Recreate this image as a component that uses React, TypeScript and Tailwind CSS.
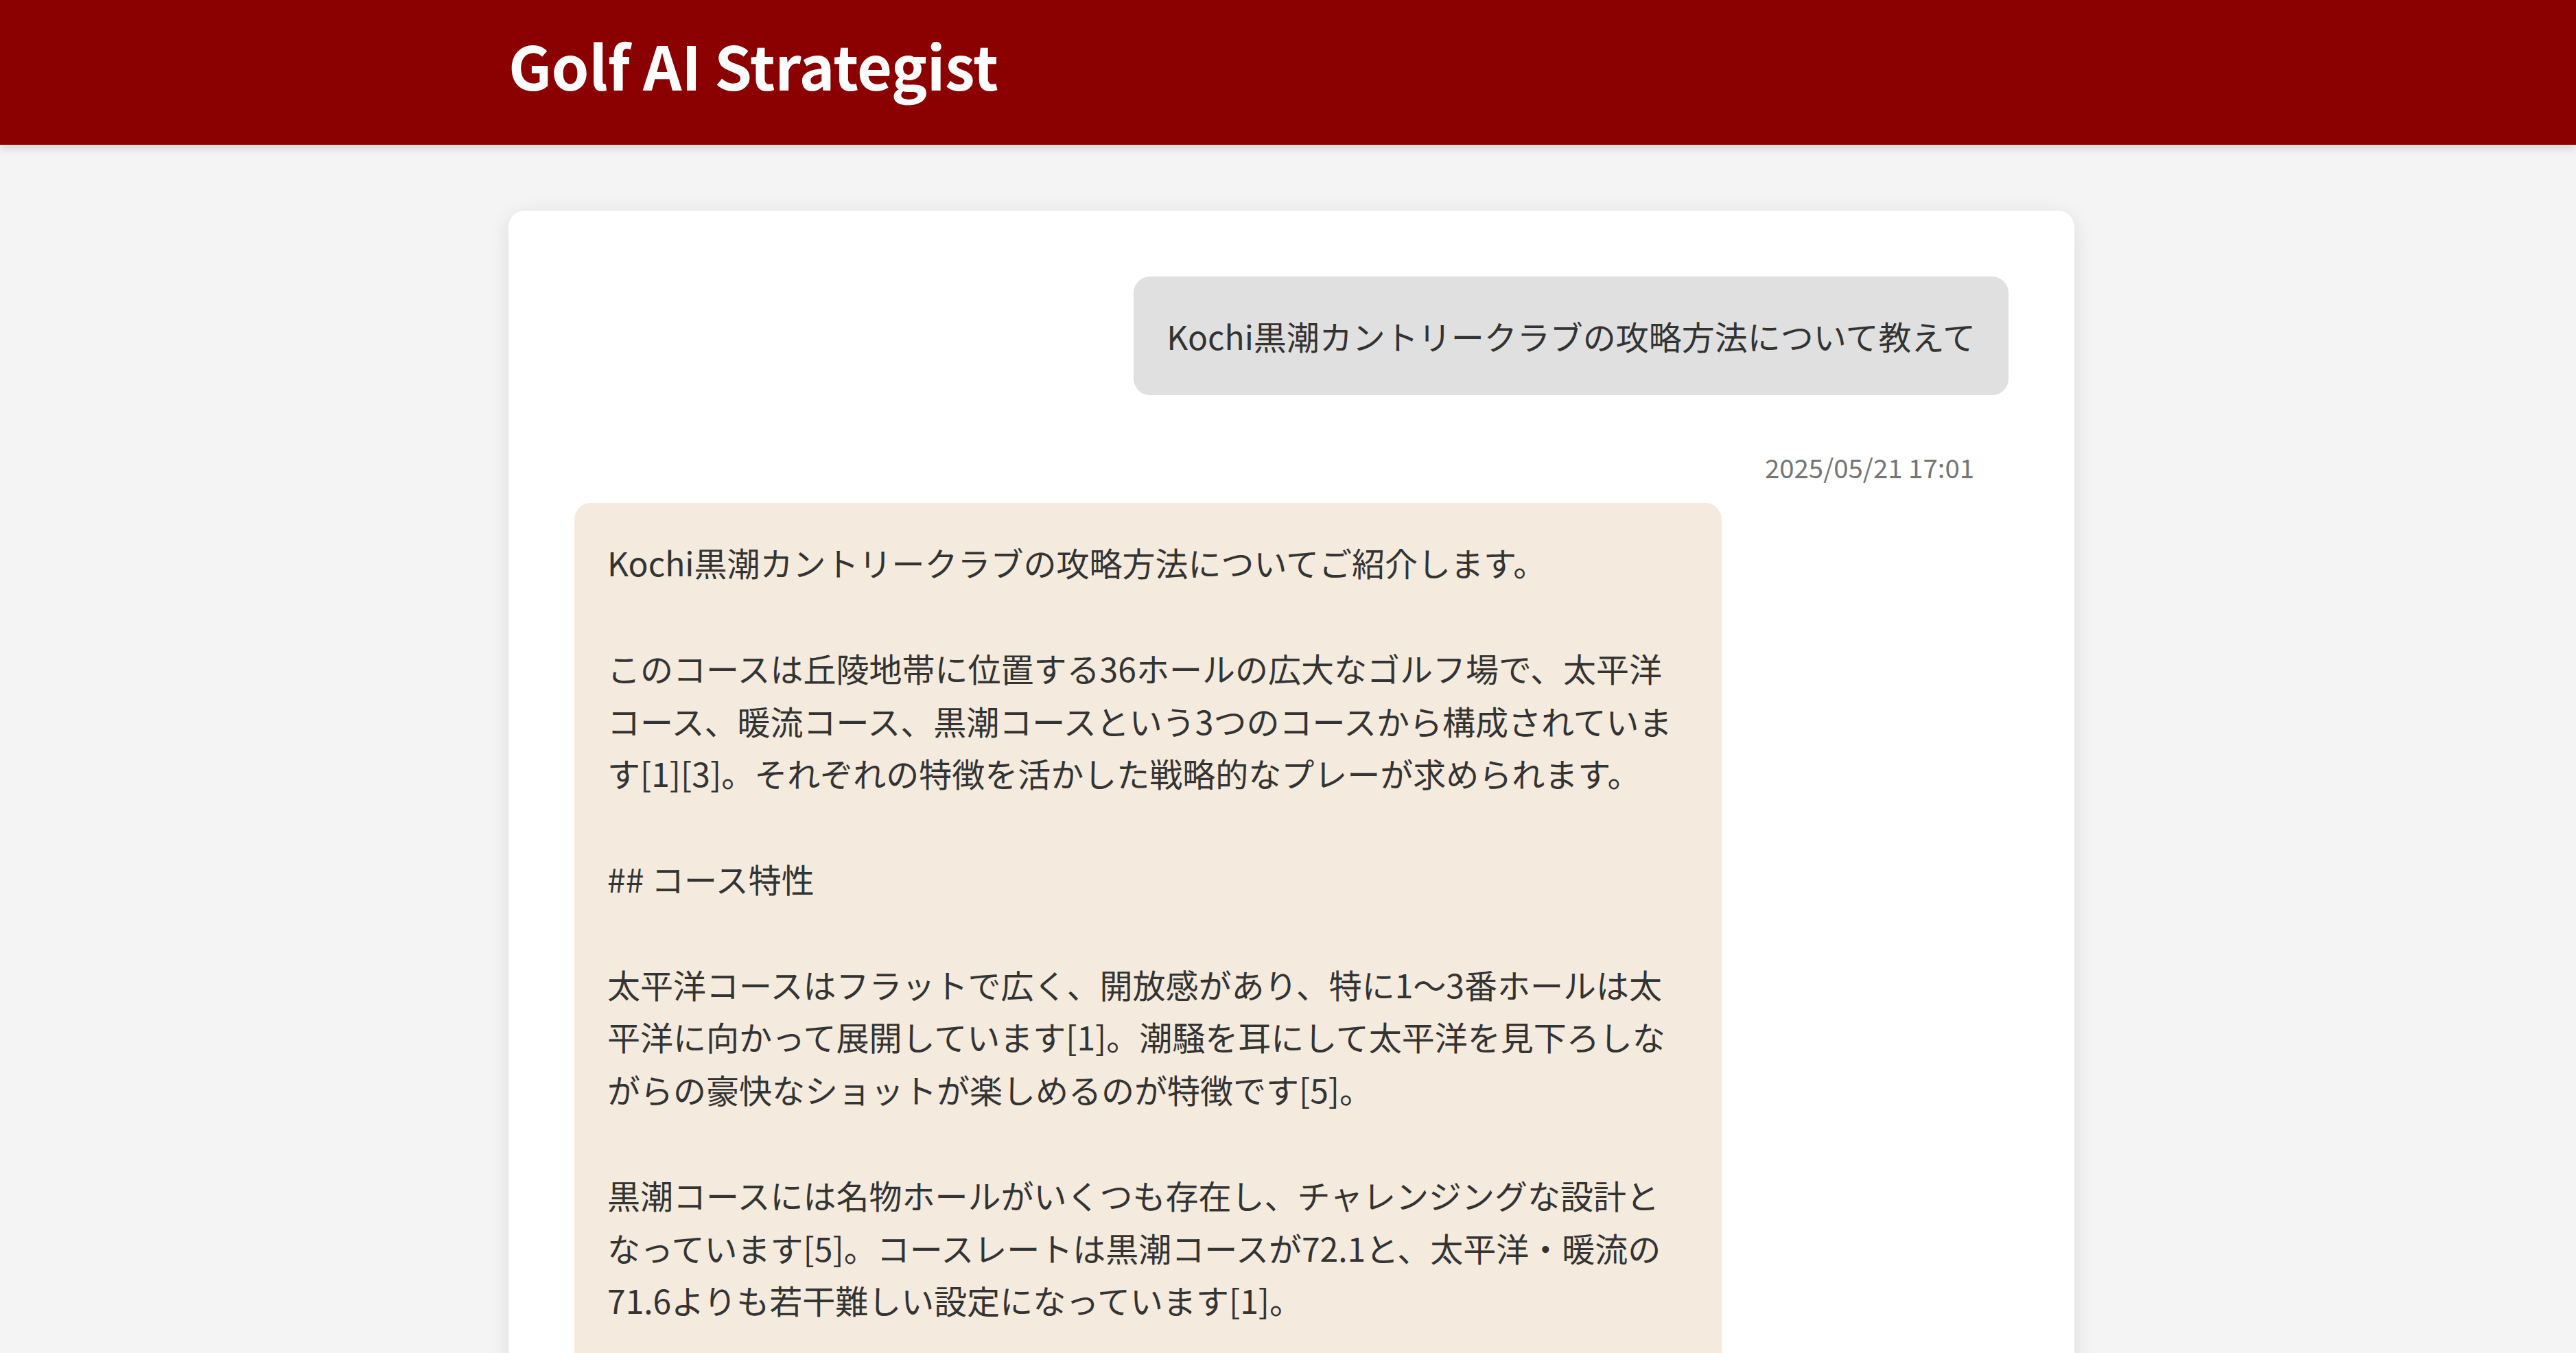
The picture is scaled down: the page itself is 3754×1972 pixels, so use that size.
import React from "react";

const answer = `Kochi黒潮カントリークラブの攻略方法についてご紹介します。

このコースは丘陵地帯に位置する36ホールの広大なゴルフ場で、太平洋コース、暖流コース、黒潮コースという3つのコースから構成されています[1][3]。それぞれの特徴を活かした戦略的なプレーが求められます。

## コース特性

太平洋コースはフラットで広く、開放感があり、特に1〜3番ホールは太平洋に向かって展開しています[1]。潮騒を耳にして太平洋を見下ろしながらの豪快なショットが楽しめるのが特徴です[5]。

黒潮コースには名物ホールがいくつも存在し、チャレンジングな設計となっています[5]。コースレートは黒潮コースが72.1と、太平洋・暖流の71.6よりも若干難しい設定になっています[1]。

## 攻略のポイント

ティーショットでは風向きを確認し、無理をせずフェアウェイキープを心がけましょう。`;

export default function App() {
  return (
    <div
      className="h-[1972px] overflow-hidden bg-[#f4f4f4] text-[#333333]"
      style={{ fontFamily: '"Noto Sans CJK JP", "Noto Sans", sans-serif' }}
    >
      <header className="h-[211px] bg-[#8b0000] shadow-[0_6px_12px_rgba(0,0,0,0.12)] relative z-10">
        <div className="w-[2282px] ml-[741px] pt-[50px]">
          <h1 className="text-[88px] font-bold text-white leading-none tracking-[-0.5px]">Golf AI Strategist</h1>
        </div>
      </header>
      <main className="pt-[96px]">
        <div className="w-[2282px] ml-[741px] bg-white rounded-[24px] shadow-[0_6px_30px_rgba(0,0,0,0.1)] px-[96px] pt-[96px] pb-[96px]">
          <div className="flex justify-end">
            <div className="bg-[#e0e0e0] rounded-[24px] px-[48px] py-[48px] text-[48px] leading-[1.6] max-w-[80%]">
              Kochi黒潮カントリークラブの攻略方法について教えて
            </div>
          </div>
          <div className="flex justify-end mt-[74px] pr-[50px]">
            <span className="text-[38.4px] leading-[1.6] text-[#757575]">2025/05/21 17:01</span>
          </div>
          <div className="flex justify-start mt-[22px]">
            <div className="bg-[#f4eadd] rounded-[24px] px-[48px] py-[48px] text-[48px] leading-[1.6] w-[80%] whitespace-pre-wrap">
              {answer}
            </div>
          </div>
        </div>
      </main>
    </div>
  );
}
